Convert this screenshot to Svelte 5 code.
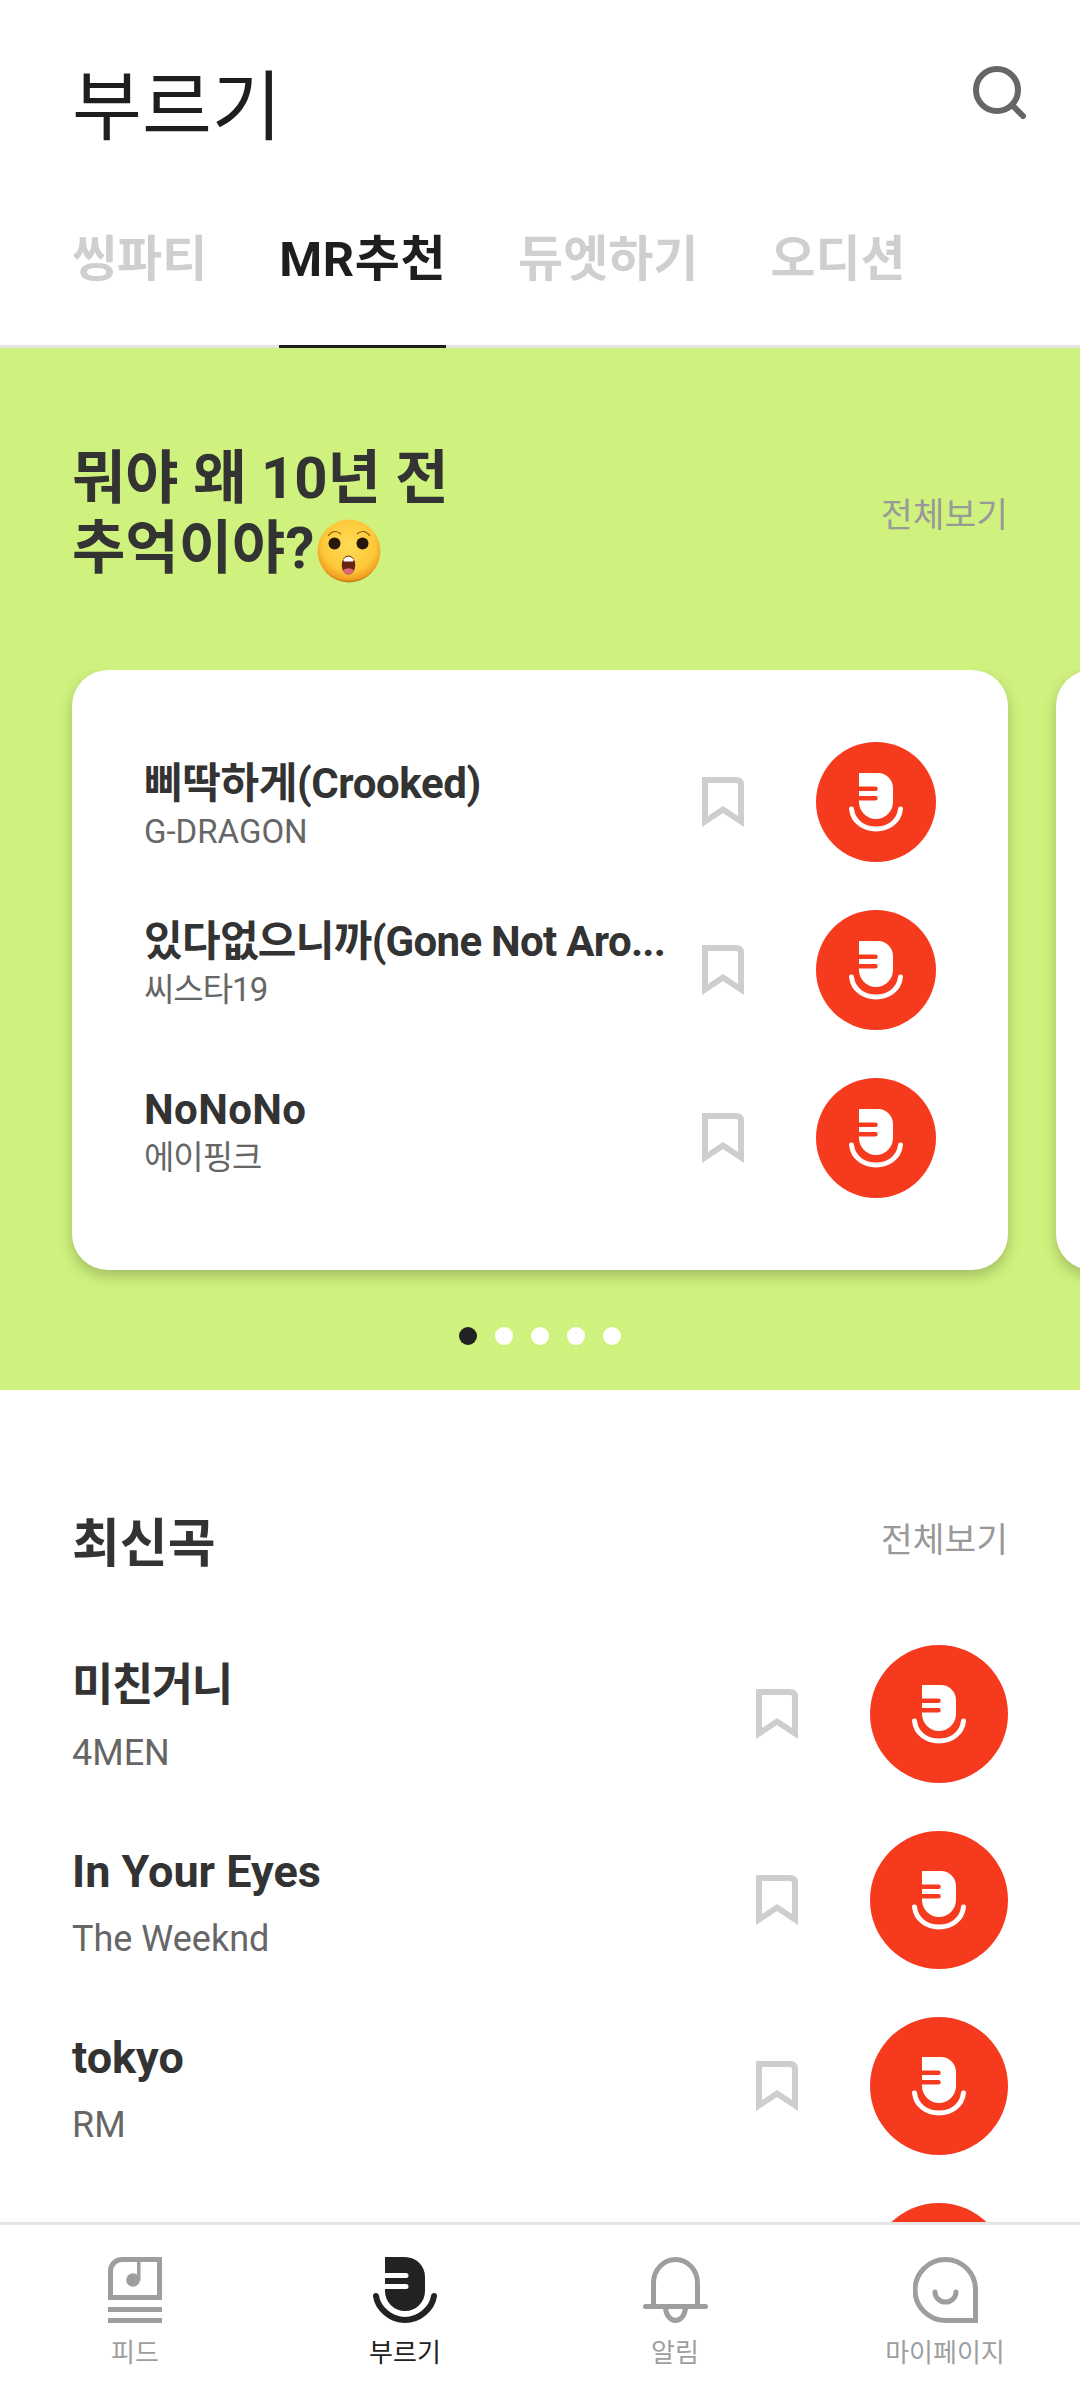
<script>
  const tabs = ['씽파티', 'MR추천', '듀엣하기', '오디션'];
  const cardSongs = [
    { title: '삐딱하게(Crooked)', artist: 'G-DRAGON', latinArtist: true, tracking: '-0.4px' },
    { title: '있다없으니까(Gone Not Aro...', artist: '씨스타19', latinArtist: false, tracking: '-0.7px' },
    { title: 'NoNoNo', artist: '에이핑크', latinArtist: false, tracking: '0.4px' }
  ];
  const latest = [
    { title: '미친거니', artist: '4MEN', ko: true },
    { title: 'In Your Eyes', artist: 'The Weeknd', ko: false },
    { title: 'tokyo', artist: 'RM', ko: false },
    { title: '', artist: '', ko: false }
  ];
  const dots = [0, 1, 2, 3, 4];
</script>

{#snippet bookmark()}
  <svg class="bookmark" viewBox="0 0 42 50" aria-hidden="true">
    <path d="M3 3H34Q39 3 39 8V44.5L21 32.5L3 44.5Z" fill="none" stroke="#cecece" stroke-width="6" />
  </svg>
{/snippet}

{#snippet singButton(cls)}
  <button class="sing {cls}" aria-label="부르기">
    <svg viewBox="0 0 120 120" aria-hidden="true">
      <path fill="#fff" d="M43 31H62A15 15 0 0 1 77 46V60A17 17 0 0 1 43 60V58.5H59.5a2.25 2.25 0 0 0 0-4.5H43V49H59.5a2.25 2.25 0 0 0 0-4.5H43Z" />
      <path fill="none" stroke="#fff" stroke-width="5" stroke-linecap="round" d="M35.5 67C37 80 48 87 60 87C72 87 83 80 84.5 67" />
    </svg>
  </button>
{/snippet}

<div class="screen">
  <main class="content">
    <header class="title-row">
      <h1>부르기</h1>
      <svg class="search" viewBox="0 0 54 54" aria-hidden="true">
        <circle cx="25" cy="25" r="21" fill="none" stroke="#666" stroke-width="6" />
        <path d="M40 40L51 51" stroke="#666" stroke-width="6" stroke-linecap="round" />
      </svg>
    </header>

    <nav class="tabs">
      {#each tabs as tab, i}
        <span class="tab" class:active={i === 1}>{tab}</span>
      {/each}
    </nav>

    <section class="promo">
      <div class="section-head promo-head">
        <h2>뭐야 왜 10년 전<br />추억이야?<svg class="emoji" viewBox="0 0 64 64" aria-hidden="true">
            <defs>
              <radialGradient id="face" cx="50%" cy="40%" r="60%">
                <stop offset="0%" stop-color="#ffdc55" />
                <stop offset="70%" stop-color="#fdc83a" />
                <stop offset="92%" stop-color="#f2a020" />
                <stop offset="100%" stop-color="#b9700f" />
              </radialGradient>
            </defs>
            <circle cx="32" cy="32" r="31.5" fill="url(#face)" />
            <path d="M11 17Q17 9 24 15M40 15Q47 9 53 17" fill="none" stroke="#8a5a10" stroke-width="1.1" />
            <circle cx="17.5" cy="24.5" r="6" fill="#2a1608" />
            <circle cx="45.5" cy="24.5" r="6" fill="#2a1608" />
            <ellipse cx="31.5" cy="46" rx="6.8" ry="9.5" fill="#6a2412" />
            <path d="M26.2 40.5Q31.5 34.5 36.8 40.5L36 42.5H27Z" fill="#fff" />
            <path d="M26 51Q31.5 47.5 37 51Q34.5 55.5 31.5 55.5Q28.5 55.5 26 51Z" fill="#e0677c" />
          </svg></h2>
        <span class="more">전체보기</span>
      </div>

      <div class="carousel">
        <div class="card">
          {#each cardSongs as song}
            <div class="row card-row" class:latin={song.latinArtist}>
              <div class="meta">
                <div class="song" style:letter-spacing={song.tracking}>{song.title}</div>
                <div class="artist">{song.artist}</div>
              </div>
              {@render bookmark()}
              {@render singButton('small')}
            </div>
          {/each}
        </div>
        <div class="card peek"></div>
      </div>

      <div class="dots">
        {#each dots as d}
          <i class="dot" class:on={d === 0}></i>
        {/each}
      </div>
    </section>

    <section class="latest">
      <div class="section-head latest-head">
        <h2>최신곡</h2>
        <span class="more">전체보기</span>
      </div>
      <div class="list">
        {#each latest as song}
          <div class="row list-row">
            <div class="meta">
              {#if song.title}
                <div class="song" class:ko={song.ko}>{song.title}</div>
                <div class="artist">{song.artist}</div>
              {/if}
            </div>
            {@render bookmark()}
            {@render singButton('large')}
          </div>
        {/each}
      </div>
    </section>
  </main>

  <footer class="bottom-nav">
    <div class="nav-item">
      <svg viewBox="0 0 54 66" width="54" height="66" aria-hidden="true">
        <path d="M2.5 40.5V14A11.5 11.5 0 0 1 14 2.5H51.5V40.5Z" fill="none" stroke="#9e9e9e" stroke-width="5" />
        <rect x="0" y="50" width="54" height="5" fill="#9e9e9e" />
        <rect x="0" y="61" width="54" height="5" fill="#9e9e9e" />
        <circle cx="25" cy="23" r="6.8" fill="#9e9e9e" />
        <rect x="29" y="5" width="3.5" height="19" fill="#9e9e9e" />
      </svg>
      <span>피드</span>
    </div>
    <div class="nav-item current">
      <svg viewBox="0 0 64 66" width="64" height="66" aria-hidden="true">
        <path fill="#222" d="M12 0H32A20 20 0 0 1 52 20V34A20 20 0 0 1 12 34V32H33a2.5 2.5 0 0 0 0-5H12V21H33a2.5 2.5 0 0 0 0-5H12Z" />
        <path fill="none" stroke="#222" stroke-width="6" stroke-linecap="round" d="M3 39C5 52 18 63 32 63C46 63 59 52 61 39" />
      </svg>
      <span>부르기</span>
    </div>
    <div class="nav-item">
      <svg viewBox="0 0 65 66" width="65" height="66" aria-hidden="true">
        <path d="M10.5 49V26A22 23.5 0 0 1 54.5 26V49" fill="none" stroke="#9e9e9e" stroke-width="5" />
        <path d="M2.5 49.5H62.5" stroke="#9e9e9e" stroke-width="5" stroke-linecap="round" />
        <path d="M22.5 50A10 13.5 0 0 0 42.5 50" fill="none" stroke="#9e9e9e" stroke-width="5" />
      </svg>
      <span>알림</span>
    </div>
    <div class="nav-item">
      <svg viewBox="0 0 65 66" width="65" height="66" aria-hidden="true">
        <path d="M32.5 2.5A30 30 0 0 1 62.5 32.5V63.5H32.5A30.5 30.5 0 0 1 32.5 2.5Z" fill="none" stroke="#9e9e9e" stroke-width="5" />
        <path d="M22 35A10.5 10 0 0 0 43 35" fill="none" stroke="#9e9e9e" stroke-width="5" stroke-linecap="round" />
      </svg>
      <span>마이페이지</span>
    </div>
  </footer>
</div>

<style>
  :global(body) {
    margin: 0;
    background: #fff;
  }

  .screen {
    width: 1080px;
    height: 2402px;
    display: flex;
    flex-direction: column;
    overflow: hidden;
    font-family: Roboto, "Noto Sans CJK KR", sans-serif;
    color: #333;
  }

  .content {
    flex: 1;
    min-height: 0;
    overflow: hidden;
  }

  .title-row {
    height: 210px;
    box-sizing: border-box;
    padding: 65px 54px 0 72px;
    display: flex;
    justify-content: space-between;
    align-items: flex-start;
  }

  h1 {
    margin: 3px 0 0;
    font-size: 76px;
    line-height: 80px;
    font-weight: 400;
    color: #1e1e1e;
  }

  .search {
    width: 54px;
    height: 54px;
    display: block;
  }

  .tabs {
    display: flex;
    gap: 72px;
    padding: 0 72px;
    height: 138px;
    box-sizing: border-box;
    border-bottom: 3px solid #e5e5e5;
  }

  .tab {
    box-sizing: border-box;
    height: 138px;
    padding-top: 21px;
    font-size: 49px;
    line-height: 58px;
    font-weight: 700;
    color: #cfcfcf;
    white-space: nowrap;
  }

  .tab.active {
    color: #1e1e1e;
    border-bottom: 3px solid #1e1e1e;
    letter-spacing: 0.6px;
  }

  .promo {
    background: #cff27e;
    height: 1042px;
    box-sizing: border-box;
    padding-top: 95px;
  }

  .section-head {
    display: flex;
    justify-content: space-between;
    align-items: center;
    padding: 0 72px;
  }

  h2 {
    margin: 0;
    color: #333;
    font-weight: 700;
  }

  .promo-head h2 {
    font-size: 58px;
    line-height: 70px;
  }

  .emoji {
    width: 64px;
    height: 64px;
    margin: -20px 0 -20px 3px;
    vertical-align: 5px;
  }

  .more {
    font-size: 34.5px;
    line-height: 44px;
    color: #999;
    padding-top: 3px;
  }

  .carousel {
    display: flex;
    gap: 48px;
    margin-top: 87px;
    padding-left: 72px;
    overflow: hidden;
    padding-bottom: 30px;
    margin-bottom: -30px;
  }

  .card {
    flex: 0 0 936px;
    min-width: 0;
    box-sizing: border-box;
    height: 600px;
    padding: 72px;
    background: #fff;
    border-radius: 36px;
    box-shadow: 0 6px 14px rgba(0, 0, 0, 0.22);
    display: flex;
    flex-direction: column;
    gap: 48px;
  }

  .row {
    display: flex;
    align-items: center;
    min-width: 0;
  }

  .meta {
    flex: 1 1 0;
    min-width: 0;
  }

  .song {
    font-weight: 700;
    white-space: nowrap;
    color: #333;
  }

  .artist {
    color: #666;
    white-space: nowrap;
  }

  .card-row .meta {
    margin-right: 30px;
    padding-bottom: 14px;
  }

  .card-row.latin .meta {
    padding-top: 5px;
    padding-bottom: 0;
  }

  .card-row .song {
    font-size: 42px;
    line-height: 54px;
  }

  .card-row .artist {
    font-size: 33px;
    line-height: 42px;
    letter-spacing: -1px;
  }

  .card-row.latin .artist {
    letter-spacing: 0;
  }

  .list-row .meta {
    padding-top: 5px;
  }

  .list-row .song {
    font-size: 45px;
    line-height: 58px;
  }

  .list-row .song.ko {
    letter-spacing: -1.5px;
  }

  .list-row .artist {
    font-size: 36px;
    line-height: 46px;
    margin-top: 15px;
  }

  .bookmark {
    flex: 0 0 42px;
    width: 42px;
    height: 50px;
    margin-right: 72px;
    overflow: visible;
  }

  .sing {
    flex: none;
    display: flex;
    align-items: center;
    justify-content: center;
    padding: 0;
    border: 0;
    border-radius: 50%;
    background: #f63a1e;
  }

  .sing svg {
    display: block;
    flex: none;
    width: 120px;
    height: 120px;
  }

  .sing.small {
    width: 120px;
    height: 120px;
  }

  .sing.large {
    width: 138px;
    height: 138px;
  }

  .dots {
    display: flex;
    justify-content: center;
    gap: 18px;
    margin-top: 57px;
  }

  .dot {
    width: 18px;
    height: 18px;
    border-radius: 50%;
    background: #fff;
  }

  .dot.on {
    background: #222;
  }

  .latest {
    padding-top: 120px;
  }

  .latest-head h2 {
    font-size: 52px;
    line-height: 60px;
    padding-top: 5px;
  }

  .latest-head .more {
    padding-top: 0;
    padding-bottom: 6px;
  }

  .list {
    margin-top: 70px;
    padding: 0 72px;
    display: flex;
    flex-direction: column;
    gap: 48px;
  }

  .bottom-nav {
    flex: none;
    height: 180px;
    box-sizing: border-box;
    border-top: 3px solid #e5e5e5;
    padding-top: 32px;
    display: grid;
    grid-template-columns: repeat(4, 270px);
    background: #fff;
  }

  .nav-item {
    display: flex;
    flex-direction: column;
    align-items: center;
    gap: 13px;
    font-size: 26px;
    line-height: 34px;
    color: #9e9e9e;
  }

  .nav-item svg {
    display: block;
  }

  .nav-item.current {
    color: #222;
  }
</style>
